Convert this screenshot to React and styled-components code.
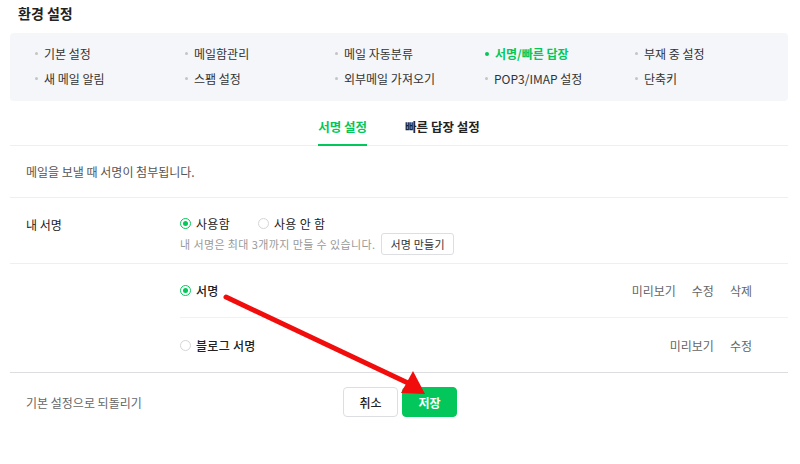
import React from 'react';
import styled, { createGlobalStyle } from 'styled-components';

const GREEN = '#03c75a';

const GlobalStyle = createGlobalStyle`
  html, body {
    margin: 0;
    padding: 0;
    background: #fff;
  }
  body {
    font-family: 'Noto Sans CJK KR', 'Noto Sans', sans-serif;
    color: #222;
  }
`;

const Page = styled.div`
  position: relative;
  width: 800px;
  height: 464px;
  padding: 0 12px 0 10px;
  box-sizing: border-box;
  overflow: hidden;
`;

const Title = styled.h1`
  margin: 0;
  height: 33px;
  padding-left: 8px;
  display: flex;
  align-items: center;
  font-size: 14px;
  font-weight: 700;
  margin-top: -4px;
  margin-bottom: 4px;
`;

const MenuPanel = styled.div`
  background: #f5f6f9;
  border-radius: 4px;
  height: 68px;
  padding: 8px 0 0 25px;
  box-sizing: border-box;
  display: grid;
  grid-template-columns: repeat(5, 150px);
  grid-auto-rows: 25px;
`;

const MenuItem = styled.div`
  display: flex;
  align-items: center;
  font-size: 12px;
  color: ${p => (p.$active ? GREEN : '#333')};
  font-weight: ${p => (p.$active ? 700 : 400)};

  &::before {
    content: '';
    width: ${p => (p.$active ? 4 : 3)}px;
    height: ${p => (p.$active ? 4 : 3)}px;
    border-radius: 50%;
    background: ${p => (p.$active ? GREEN : '#c4c4c4')};
    margin-right: 6px;
  }
`;

const TabBar = styled.div`
  display: flex;
  justify-content: center;
  gap: 38px;
  height: 44px;
  border-bottom: 1px solid #eeeff1;
`;

const Tab = styled.div`
  display: flex;
  align-items: center;
  padding-top: 8px;
  box-sizing: border-box;
  font-size: 12.5px;
  font-weight: 700;
  color: ${p => (p.$active ? GREEN : '#222')};
  border-bottom: 2px solid ${p => (p.$active ? GREEN : 'transparent')};
  margin-bottom: -1px;
`;

const Description = styled.div`
  height: 51px;
  padding-left: 16px;
  display: flex;
  align-items: center;
  font-size: 12px;
  color: #555;
  border-bottom: 1px solid #eeeff1;
`;

const SettingRow = styled.div`
  display: flex;
  border-bottom: 1px solid #eeeff1;
`;

const Label = styled.div`
  width: 170px;
  padding: 18px 0 0 16px;
  box-sizing: border-box;
  font-size: 12px;
  font-weight: 400;
  color: #222;
`;

const Field = styled.div`
  flex: 1;
  padding: 17px 0 8px;
  display: flex;
  flex-direction: column;
  gap: 1px;
`;

const RadioGroup = styled.div`
  display: flex;
  gap: 28px;
`;

const Radio = styled.label`
  display: flex;
  align-items: center;
  gap: 5px;
  font-size: 12px;
  letter-spacing: 0.3px;
  color: #222;
  font-weight: ${p => (p.$bold ? 500 : 400)};
`;

const RadioDot = styled.span`
  width: 11px;
  height: 11px;
  border-radius: 50%;
  box-sizing: border-box;
  border: 1px solid ${p => (p.$checked ? GREEN : '#d3d5d9')};
  background: #fff;
  display: flex;
  align-items: center;
  justify-content: center;

  &::after {
    content: '';
    width: 5px;
    height: 5px;
    border-radius: 50%;
    background: ${p => (p.$checked ? GREEN : 'transparent')};
  }
`;

const Help = styled.div`
  display: flex;
  align-items: center;
  gap: 6px;
  font-size: 11px;
  letter-spacing: 0.4px;
  color: #999;
`;

const SmallButton = styled.button`
  height: 22px;
  padding: 0 8px;
  border: 1px solid #dcdee2;
  border-radius: 3px;
  background: #fff;
  font-family: inherit;
  font-size: 11px;
  letter-spacing: 0.2px;
  color: #333;
`;

const SignatureList = styled.div`
  border-bottom: 1px solid #dcdde0;
`;

const SignatureItem = styled.div`
  margin-left: 170px;
  height: 53px;
  display: flex;
  align-items: center;
  justify-content: space-between;
  padding-right: 36px;
  & + & {
    height: 54px;
    border-top: 1px solid #f0f1f3;
  }
`;

const Actions = styled.div`
  display: flex;
  gap: 16px;
  font-size: 12px;
  color: #666;
`;

const Footer = styled.div`
  display: flex;
  align-items: center;
  height: 58px;
  padding-left: 16px;
`;

const ResetText = styled.div`
  width: 317px;
  font-size: 12px;
  color: #666;
`;

const ButtonGroup = styled.div`
  display: flex;
  gap: 4px;
`;

const Button = styled.button`
  width: 55px;
  height: 30px;
  border-radius: 4px;
  font-family: inherit;
  font-size: 12px;
  font-weight: ${p => (p.$primary ? 700 : 500)};
  border: 1px solid ${p => (p.$primary ? GREEN : '#dcdee2')};
  background: ${p => (p.$primary ? GREEN : '#fff')};
  color: ${p => (p.$primary ? '#fff' : '#222')};
`;

const Annotation = styled.svg`
  position: absolute;
  left: 0;
  top: 0;
  pointer-events: none;
`;

const menu = [
  ['기본 설정'], ['메일함관리'], ['메일 자동분류'], ['서명/빠른 답장', true], ['부재 중 설정'],
  ['새 메일 알림'], ['스팸 설정'], ['외부메일 가져오기'], ['POP3/IMAP 설정'], ['단축키'],
];

const signatures = [
  { name: '서명', checked: true, actions: ['미리보기', '수정', '삭제'] },
  { name: '블로그 서명', checked: false, actions: ['미리보기', '수정'] },
];

const App = () => {
  return (
    <>
      <GlobalStyle />
      <Page>
        <Title>환경 설정</Title>
        <MenuPanel>
          {menu.map(([text, active]) => (
            <MenuItem key={text} $active={active}>{text}</MenuItem>
          ))}
        </MenuPanel>
        <TabBar>
          <Tab $active>서명 설정</Tab>
          <Tab>빠른 답장 설정</Tab>
        </TabBar>
        <Description>메일을 보낼 때 서명이 첨부됩니다.</Description>
        <SettingRow>
          <Label>내 서명</Label>
          <Field>
            <RadioGroup>
              <Radio><RadioDot $checked />사용함</Radio>
              <Radio><RadioDot />사용 안 함</Radio>
            </RadioGroup>
            <Help>
              내 서명은 최대 3개까지 만들 수 있습니다.
              <SmallButton>서명 만들기</SmallButton>
            </Help>
          </Field>
        </SettingRow>
        <SignatureList>
          {signatures.map(s => (
            <SignatureItem key={s.name}>
              <Radio $bold><RadioDot $checked={s.checked} />{s.name}</Radio>
              <Actions>
                {s.actions.map(a => <span key={a}>{a}</span>)}
              </Actions>
            </SignatureItem>
          ))}
        </SignatureList>
        <Footer>
          <ResetText>기본 설정으로 되돌리기</ResetText>
          <ButtonGroup>
            <Button>취소</Button>
            <Button $primary>저장</Button>
          </ButtonGroup>
        </Footer>
        <Annotation width="800" height="464" viewBox="0 0 800 464">
          <line x1="226" y1="297" x2="408" y2="383" stroke="#f20d0d" strokeWidth="5" strokeLinecap="round" />
          <polygon points="425,394 401,393 413,371" fill="#f20d0d" />
        </Annotation>
      </Page>
    </>
  );
};

export default App;
